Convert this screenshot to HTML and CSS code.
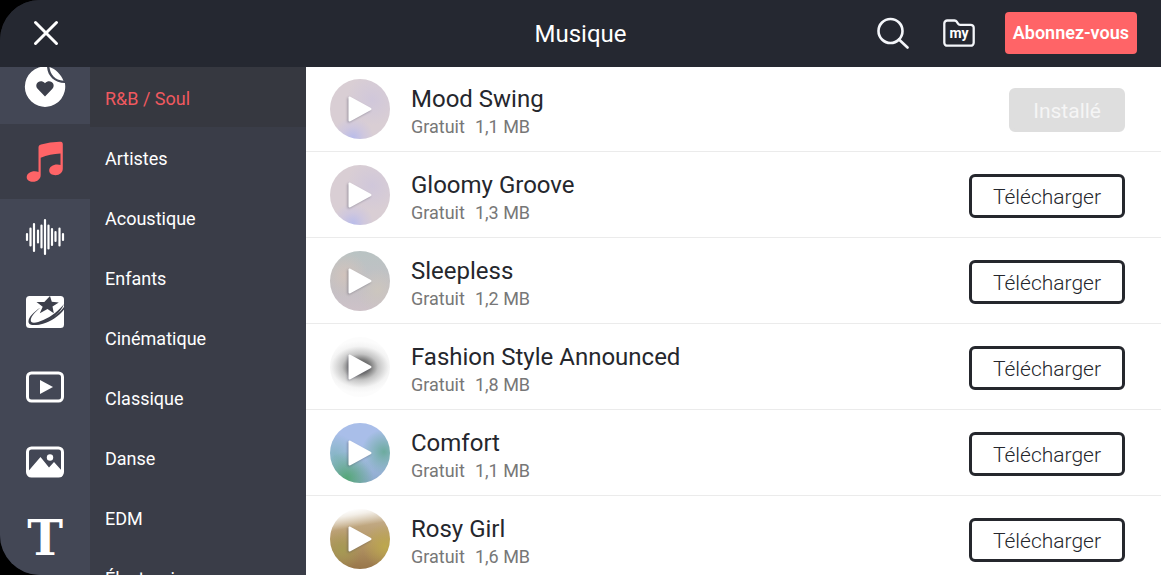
FILE: index.html
```html
<!DOCTYPE html>
<html lang="fr">
<head>
<meta charset="utf-8">
<meta name="viewport" content="width=device-width, initial-scale=1">
<title>Musique</title>
<link rel="stylesheet" href="styles.css">
</head>
<body>
<div class="app">
  <header class="header">
    <button class="icon-button close" type="button" aria-label="Fermer">
      <svg width="26" height="26" viewBox="0 0 26 26"><path d="M2.500 2.500l21 21M23.500 2.500l-21 21" fill="none" stroke="#fff" stroke-width="3" stroke-linecap="round"/></svg>
    </button>
    <h1 class="title">Musique</h1>
    <div class="actions">
      <button class="icon-button" type="button" aria-label="Rechercher">
        <svg width="36" height="32" viewBox="0 0 36 32"><g fill="none" stroke="#f4f6fa" stroke-width="2.600" stroke-linecap="round"><circle cx="13.500" cy="14" r="12"/><path d="M22 22.500l8.500 8"/></g></svg>
      </button>
      <button class="icon-button" type="button" aria-label="Mes ressources">
        <svg width="32" height="28" viewBox="0 0 32 28"><path d="M1.300 4.500a3 3 0 0 1 3-3h7.200c1 0 1.700.4 2.200 1.200l1.300 2c.5.800 1.200 1.100 2.100 1.100h10.600a3 3 0 0 1 3 3v14.900a3 3 0 0 1-3 3H4.300a3 3 0 0 1-3-3z" fill="none" stroke="#f4f6fa" stroke-width="2.300"/><text class="my" x="16" y="19" text-anchor="middle">my</text></svg>
      </button>
      <button class="subscribe" type="button">Abonnez-vous</button>
    </div>
  </header>
  <div class="body">
    <nav class="rail" aria-label="Types">
      <button class="rail-item" type="button" aria-label="Autocollants">
        <svg width="42" height="42" viewBox="0 0 42 42"><path d="M23 .6A20.200 20.200 0 1 0 40.900 17C30.500 17 23.500 10 23 .6z" fill="#fff"/><path d="M25.500 1c.6 7.500 5.500 13.200 14 13.800C37 8.500 31.500 3 25.500 1z" fill="#fff"/><path d="M21 30.500l-7.200-7.400c-4.600-5 2.400-10.900 7.200-5.800 4.800-5.100 11.800.8 7.200 5.800z" fill="#3c3f4b"/></svg>
      </button>
      <button class="rail-item selected" type="button" aria-label="Musique">
        <svg width="38" height="42" viewBox="0 0 38 42"><path d="M12.500 6.500c0-1.700.8-2.700 2.500-3.100Q24 1 33.500.8c2-.1 3.300.4 3.300 2.400V27.500c0 3.800-3 6.700-7.300 6.700-3.600 0-6.300-1.900-6.300-4.700 0-3.500 3.700-6 8-6 1.400 0 2.500.2 3.300.6V12.500Q24 13 14.700 16.800V34c0 3.800-3.300 6.800-7.800 6.800-3.500 0-6.200-1.900-6.200-4.600 0-3.500 3.700-6 8-6 1.500 0 2.800.2 3.800.7z" fill="#ff6467"/></svg>
      </button>
      <button class="rail-item" type="button" aria-label="Effets sonores">
        <svg width="40" height="38" viewBox="0 0 40 38"><path d="M2 16v6M5.500 10.500v17M9 6v27M13 12.500v12M16.500 7.500v22M20 2v34M23.500 7.500v23M27 11v16M30.500 14v9M34.500 10.500v17M38 16v6" fill="none" stroke="#fff" stroke-width="2.200" stroke-linecap="round"/></svg>
      </button>
      <button class="rail-item" type="button" aria-label="Effets">
        <svg width="40" height="34" viewBox="0 0 40 34"><rect x="1" y="1" width="38" height="32" rx="3.500" fill="#fff"/><g fill="#3c3f4b"><path d="M25 1l1.800 5.800 7 .6-6.300 4.100 1.300 6.700-6.300-4.200-7.700 4.200 2.900-6.500L11.500 7l7.800.1z"/><path d="M39 9c-3 8-11 15-20 18.500-8 3.200-16 4-15.500-1.500.4-4 4.500-8.500 12-13.500-5.800 5-9 8.500-9.700 12-.8 5 6 3.500 12.500.6C26.500 21.500 34.500 15 39 9z"/><path d="M39 14.500c-5 6.500-13 12-21 14.300-4.500 1.300-9 1.700-12 .4 4.500.3 10-1 16-3.700 7-3.200 13-8 17-13.500z"/></g></svg>
      </button>
      <button class="rail-item" type="button" aria-label="Vidéos">
        <svg width="40" height="32" viewBox="0 0 40 32"><rect x="2.500" y="2" width="35" height="28" rx="4" fill="none" stroke="#fff" stroke-width="3"/><path d="M15 9l13 7-13 7z" fill="#fff"/></svg>
      </button>
      <button class="rail-item" type="button" aria-label="Images">
        <svg width="40" height="32" viewBox="0 0 40 32"><rect x="2.500" y="2" width="35" height="28" rx="4" fill="none" stroke="#fff" stroke-width="3"/><path d="M3 25.500L15.500 11l8.500 10.500 5-5.500 8.500 9.500V29a2 2 0 0 1-2 2h-30a2.500 2.500 0 0 1-2.500-2.500z" fill="#fff"/><circle cx="25" cy="11.500" r="3.200" fill="#fff"/></svg>
      </button>
      <button class="rail-item glyph" type="button" aria-label="Polices">T</button>
    </nav>
    <nav class="categories" aria-label="Catégories">
      <button class="category active" type="button">R&amp;B / Soul</button>
      <button class="category" type="button">Artistes</button>
      <button class="category" type="button">Acoustique</button>
      <button class="category" type="button">Enfants</button>
      <button class="category" type="button">Cinématique</button>
      <button class="category" type="button">Classique</button>
      <button class="category" type="button">Danse</button>
      <button class="category" type="button">EDM</button>
      <button class="category" type="button">Électronique</button>
    </nav>
    <main class="tracks">
      <article class="track">
        <button class="cover lilac" type="button" aria-label="Écouter Mood Swing"><svg class="play" viewBox="0 0 26 28"><path d="M2.500 2.500v23L23.500 14z"/></svg></button>
        <div class="info"><h2 class="name">Mood Swing</h2><p class="meta"><span>Gratuit</span><span>1,1 MB</span></p></div>
        <button class="get installed" type="button" disabled>Installé</button>
      </article>
      <article class="track">
        <button class="cover lilac" type="button" aria-label="Écouter Gloomy Groove"><svg class="play" viewBox="0 0 26 28"><path d="M2.500 2.500v23L23.500 14z"/></svg></button>
        <div class="info"><h2 class="name">Gloomy Groove</h2><p class="meta"><span>Gratuit</span><span>1,3 MB</span></p></div>
        <button class="get" type="button">Télécharger</button>
      </article>
      <article class="track">
        <button class="cover mist" type="button" aria-label="Écouter Sleepless"><svg class="play" viewBox="0 0 26 28"><path d="M2.500 2.500v23L23.500 14z"/></svg></button>
        <div class="info"><h2 class="name">Sleepless</h2><p class="meta"><span>Gratuit</span><span>1,2 MB</span></p></div>
        <button class="get" type="button">Télécharger</button>
      </article>
      <article class="track">
        <button class="cover smoke" type="button" aria-label="Écouter Fashion Style Announced"><svg class="play" viewBox="0 0 26 28"><path d="M2.500 2.500v23L23.500 14z"/></svg></button>
        <div class="info"><h2 class="name">Fashion Style Announced</h2><p class="meta"><span>Gratuit</span><span>1,8 MB</span></p></div>
        <button class="get" type="button">Télécharger</button>
      </article>
      <article class="track">
        <button class="cover meadow" type="button" aria-label="Écouter Comfort"><svg class="play" viewBox="0 0 26 28"><path d="M2.500 2.500v23L23.500 14z"/></svg></button>
        <div class="info"><h2 class="name">Comfort</h2><p class="meta"><span>Gratuit</span><span>1,1 MB</span></p></div>
        <button class="get" type="button">Télécharger</button>
      </article>
      <article class="track">
        <button class="cover gold" type="button" aria-label="Écouter Rosy Girl"><svg class="play" viewBox="0 0 26 28"><path d="M2.500 2.500v23L23.500 14z"/></svg></button>
        <div class="info"><h2 class="name">Rosy Girl</h2><p class="meta"><span>Gratuit</span><span>1,6 MB</span></p></div>
        <button class="get" type="button">Télécharger</button>
      </article>
    </main>
  </div>
</div>
</body>
</html>
```

FILE: styles.css
```css
* {
  box-sizing: border-box;
}

body {
  margin: 0;
  background: #000;
  font-family: Roboto, "Liberation Sans", sans-serif;
}

button {
  margin: 0;
  padding: 0;
  border: 0;
  background: none;
  color: inherit;
  font: inherit;
  cursor: pointer;
}

svg {
  display: block;
}

.app {
  display: flex;
  flex-direction: column;
  height: 100vh;
  overflow: hidden;
  border-radius: 40px 0 0 40px;
  background: #252831;
}

.header {
  display: grid;
  grid-template-columns: 1fr auto 1fr;
  align-items: center;
  flex: none;
  height: 67px;
  padding: 0 24px 2px;
  background: #252831;
  color: #fff;
}

.close {
  justify-self: start;
  padding-left: 9px;
}

.title {
  margin: 0;
  padding-top: 3px;
  font-size: 24px;
  font-weight: 400;
  line-height: 32px;
}

.actions {
  display: flex;
  align-items: center;
  justify-content: flex-end;
  gap: 30px;
}

.my {
  fill: #fff;
  font-size: 14px;
  font-weight: 700;
}

.subscribe {
  height: 42px;
  padding: 0 8px;
  border-radius: 4px;
  background: #ff6467;
  font-size: 18px;
  font-weight: 600;
}

.body {
  display: flex;
  flex: 1;
  min-height: 0;
  overflow: hidden;
}

.rail {
  display: flex;
  flex-direction: column;
  flex: none;
  width: 90px;
  margin-top: -18px;
  background: #434755;
}

.rail-item {
  display: flex;
  align-items: center;
  justify-content: center;
  flex: none;
  height: 75px;
}

.rail-item.selected {
  background: #3a3d48;
}

.glyph {
  padding-top: 3px;
  color: #fff;
  font-family: "DejaVu Serif", serif;
  font-size: 48px;
  font-weight: 700;
  line-height: 1;
}

.categories {
  display: flex;
  flex-direction: column;
  flex: none;
  width: 216px;
  background: #3a3d48;
  color: #fff;
}

.category {
  flex: none;
  height: 60px;
  padding: 2px 15px 0;
  font-size: 18px;
  text-align: left;
}

.category.active {
  background: #363840;
  color: #f0595f;
}

.tracks {
  flex: 1;
  min-width: 0;
  margin-top: -1px;
  background: #fff;
}

.track {
  display: flex;
  align-items: center;
  height: 86px;
  padding: 0 36px 0 24px;
  border-bottom: 1px solid #ebebeb;
}

.cover {
  display: grid;
  place-items: center;
  flex: none;
  width: 60px;
  height: 60px;
  border-radius: 50%;
}

.play {
  width: 26px;
  height: 28px;
  fill: #fff;
  stroke: #fff;
  stroke-width: 2;
  stroke-linejoin: round;
  filter: drop-shadow(-1px 1px 1px rgba(60, 60, 80, 0.4));
}

.lilac {
  background: radial-gradient(circle at 38% 98%, #b9bcea 0, rgba(200, 195, 228, 0.6) 16%, transparent 30%), radial-gradient(circle at 70% 35%, #d0c7da, transparent 45%), #d9ced4;
}

.mist {
  background: radial-gradient(circle at 80% 65%, #ccc6be, transparent 35%), radial-gradient(circle at 25% 40%, #d1c3bc, transparent 40%), linear-gradient(#b9c3c3, #c3c0c5 60%, #cec2c8);
}

.smoke {
  background: radial-gradient(ellipse 36px 26px at 50% 50%, #555 0, #777 28%, #c4c4c4 50%, #f4f4f4 80%, #fcfcfc 100%);
}

.meadow {
  background: radial-gradient(circle at 28% 92%, #55a777 0, transparent 38%), radial-gradient(circle at 90% 48%, #6cab9e 0, transparent 36%), radial-gradient(circle at 8% 55%, #86b5c4 0, transparent 35%), linear-gradient(#a9bee9 55%, #8ba9ca);
}

.gold {
  background: linear-gradient(170deg, #fff 6%, rgba(255, 255, 255, 0.8) 14%, transparent 32%), radial-gradient(circle at 20% 68%, #a59a53 0, transparent 32%), radial-gradient(circle at 92% 62%, #bda84d 0, transparent 34%), linear-gradient(#c9b596, #b59767 55%, #98764a);
}

.info {
  flex: 1;
  min-width: 0;
  padding: 6px 0 0 21px;
}

.name {
  margin: 0;
  color: #25272d;
  font-size: 24px;
  font-weight: 400;
  line-height: 30px;
}

.meta {
  display: flex;
  gap: 10px;
  margin: 0;
  color: #777;
  font-size: 18px;
  line-height: 26px;
}

.get {
  height: 44px;
  margin-top: 2px;
  padding: 2px 21px 0;
  border: 3px solid #25272d;
  border-radius: 6px;
  background: #fff;
  color: #25272d;
  font-size: 21px;
  font-weight: 300;
}

.get.installed {
  border-color: #dedede;
  background: #dedede;
  color: #f5f5f5;
  font-weight: 400;
}
```
